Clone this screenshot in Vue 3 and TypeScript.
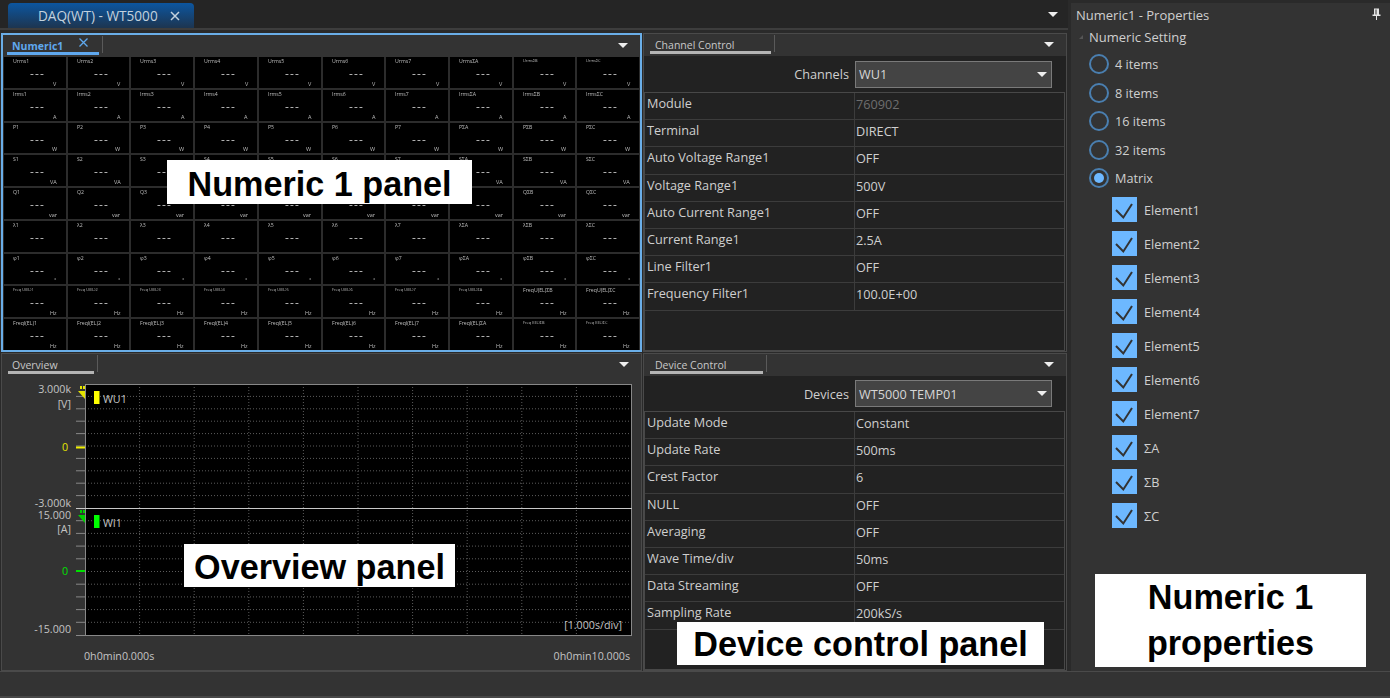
<script setup lang="ts">
const sigma = ['1', '2', '3', '4', '5', '6', '7', 'ΣA', 'ΣB', 'ΣC']

const rows = [
  { name: 'Urms', unit: 'V' },
  { name: 'Irms', unit: 'A' },
  { name: 'P', unit: 'W' },
  { name: 'S', unit: 'VA' },
  { name: 'Q', unit: 'var' },
  { name: 'λ', unit: '' },
  { name: 'φ', unit: '°' },
  { name: 'Freq U(EL)', unit: 'Hz' },
  { name: 'FreqI(EL)', unit: 'Hz' }
]

// a few labels are squeezed to a smaller size in the real app
function isSmall(name: string, i: number) {
  if (name === 'Urms') return i > 7
  if (name === 'Freq U(EL)') return i < 8
  if (name === 'FreqI(EL)') return i > 7
  return false
}

const cells = rows.flatMap((r) =>
  sigma.map((s, i) => ({
    id: r.name + s,
    label: (r.name === 'Freq U(EL)' && i > 7 ? 'FreqU(EL)' : r.name === 'FreqI(EL)' && i > 7 ? 'Freq I(EL)' : r.name) + s,
    unit: r.unit,
    small: isSmall(r.name, i)
  }))
)

const channelRows = [
  ['Module', '760902'],
  ['Terminal', 'DIRECT'],
  ['Auto Voltage Range1', 'OFF'],
  ['Voltage Range1', '500V'],
  ['Auto Current Range1', 'OFF'],
  ['Current Range1', '2.5A'],
  ['Line Filter1', 'OFF'],
  ['Frequency Filter1', '100.0E+00']
]

const deviceRows = [
  ['Update Mode', 'Constant'],
  ['Update Rate', '500ms'],
  ['Crest Factor', '6'],
  ['NULL', 'OFF'],
  ['Averaging', 'OFF'],
  ['Wave Time/div', '50ms'],
  ['Data Streaming', 'OFF'],
  ['Sampling Rate', '200kS/s']
]

const radios = ['4 items', '8 items', '16 items', '32 items', 'Matrix']
const checks = ['Element1', 'Element2', 'Element3', 'Element4', 'Element5', 'Element6', 'Element7', 'ΣA', 'ΣB', 'ΣC']

const vLines = Array.from({ length: 9 }, (_, i) => 85 + 54.6 * (i + 1))
const topLines = Array.from({ length: 9 }, (_, i) => 384 + 12.4 * (i + 1))
const bottomLines = Array.from({ length: 9 }, (_, i) => 508 + 12.7 * (i + 1))
</script>

<template>
  <div class="app">
    <div class="main">
      <div class="left">
        <div class="doc-strip">
          <div class="doc-tab">
            <span>DAQ(WT) - WT5000</span>
            <svg width="10" height="10" viewBox="0 0 10 10">
              <path d="M1 1l8 8M9 1l-8 8" stroke="#c4d2de" stroke-width="1.500" />
            </svg>
          </div>
          <i class="arrow doc-arrow"></i>
        </div>

        <div class="workspace">
          <section class="panel numeric">
            <header class="panel-head">
              <div class="tab active">
                Numeric1
                <svg class="tab-x" width="9" height="9" viewBox="0 0 9 9">
                  <path d="M0.500 0.500l8 8M8.500 0.500l-8 8" stroke="#5fa8ee" stroke-width="1.300" />
                </svg>
              </div>
              <i class="arrow"></i>
            </header>
            <div class="matrix">
              <div v-for="c in cells" :key="c.id" class="cell">
                <span class="cell-label" :class="{ small: c.small }">{{ c.label }}</span>
                <span class="cell-value">---</span>
                <span class="cell-unit">{{ c.unit }}</span>
              </div>
            </div>
            <div class="callout callout-numeric">Numeric 1 panel</div>
          </section>

          <section class="panel">
            <header class="panel-head">
              <div class="tab tab-channel">Channel Control</div>
              <i class="arrow"></i>
            </header>
            <div class="control-body">
              <div class="picker picker-channel">
                <label>Channels</label>
                <div class="select">WU1<i class="arrow"></i></div>
              </div>
              <div class="table">
                <div v-for="r in channelRows" :key="r[0]" class="row">
                  <div class="key">{{ r[0] }}</div>
                  <div class="val" :class="{ muted: r[0] === 'Module' }">{{ r[1] }}</div>
                </div>
              </div>
            </div>
          </section>

          <section class="panel overview">
            <header class="panel-head">
              <div class="tab tab-overview">Overview</div>
              <i class="arrow"></i>
            </header>
            <svg class="chart" viewBox="0 376 640 294" width="640" height="294">
              <rect x="85" y="384" width="546" height="251" fill="#000" />
              <g stroke="#5c5c5c" stroke-dasharray="1 2">
                <line v-for="x in vLines" :key="x" :x1="x" y1="384" :x2="x" y2="635" />
                <line v-for="y in topLines" :key="y" x1="85" :y1="y" x2="631" :y2="y" />
                <line v-for="y in bottomLines" :key="y" x1="85" :y1="y" x2="631" :y2="y" />
              </g>
              <g stroke="#888">
                <line x1="85.500" y1="384" x2="85.500" y2="635" />
                <line x1="631.500" y1="384" x2="631.500" y2="635" />
                <line x1="85" y1="384.500" x2="632" y2="384.500" />
                <line x1="76" y1="635.500" x2="632" y2="635.500" />
                <line v-for="y in topLines" :key="'t' + y" x1="76" :y1="y" x2="85" :y2="y" />
                <line v-for="y in bottomLines" :key="'b' + y" x1="76" :y1="y" x2="85" :y2="y" />
              </g>
              <line x1="76" y1="508.500" x2="632" y2="508.500" stroke="#c8c8c8" />
              <line x1="76" y1="447.500" x2="85" y2="447.500" stroke="#f0f000" stroke-width="2" />
              <line x1="76" y1="571" x2="85" y2="571" stroke="#00e000" stroke-width="2" />

              <path d="M78 391h7v8z M80 386h2v3h-2z M83 386h2v3h-2z" fill="#e6e600" />
              <path d="M78 515h7v8z M80 510h2v3h-2z M83 510h2v3h-2z" fill="#00d000" />
              <rect x="94" y="391" width="5.500" height="13" fill="#ffff00" />
              <rect x="94" y="515" width="5.500" height="13" fill="#00ff00" />

              <g class="chart-text">
                <text x="71" y="393" text-anchor="end">3.000k</text>
                <text x="71" y="408" text-anchor="end">[V]</text>
                <text class="yellow" x="68" y="451" text-anchor="end">0</text>
                <text x="71" y="507" text-anchor="end">-3.000k</text>
                <text x="71" y="519" text-anchor="end">15.000</text>
                <text x="71" y="533" text-anchor="end">[A]</text>
                <text class="green" x="68" y="575" text-anchor="end">0</text>
                <text x="71" y="633" text-anchor="end">-15.000</text>
                <text x="103" y="403">WU1</text>
                <text x="103" y="527">WI1</text>
                <text x="622" y="629" text-anchor="end">[1.000s/div]</text>
                <text x="84" y="660">0h0min0.000s</text>
                <text x="630" y="660" text-anchor="end">0h0min10.000s</text>
              </g>
            </svg>
            <div class="callout callout-overview">Overview panel</div>
          </section>

          <section class="panel">
            <header class="panel-head">
              <div class="tab tab-device">Device Control</div>
              <i class="arrow"></i>
            </header>
            <div class="control-body">
              <div class="picker picker-device">
                <label>Devices</label>
                <div class="select">WT5000 TEMP01<i class="arrow"></i></div>
              </div>
              <div class="table">
                <div v-for="r in deviceRows" :key="r[0]" class="row">
                  <div class="key">{{ r[0] }}</div>
                  <div class="val">{{ r[1] }}</div>
                </div>
              </div>
            </div>
            <div class="callout callout-device">Device control panel</div>
          </section>
        </div>
      </div>

      <aside class="props">
        <div class="props-title">
          <span>Numeric1 - Properties</span>
          <svg class="pin" width="9" height="12" viewBox="0 0 9 12">
            <path d="M2 0.500h5v6h1.500v1.500h-8v-1.500h1.500z M3.500 1.500v5h1v-5z M4 8h1v4h-1z" fill="#e4e4e4" fill-rule="evenodd" />
          </svg>
        </div>
        <div class="props-group"><i class="twisty"></i>Numeric Setting</div>
        <div class="radios">
          <div v-for="r in radios" :key="r" class="radio-row">
            <span class="radio" :class="{ on: r === 'Matrix' }"></span>{{ r }}
          </div>
        </div>
        <div class="checks">
          <div v-for="c in checks" :key="c" class="check-row">
            <span class="check">
              <svg width="25" height="25" viewBox="0 0 25 25">
                <path d="M4 13l7.300 7.500 8.700-13.500" fill="none" stroke="#333" stroke-width="2" />
              </svg>
            </span>{{ c }}
          </div>
        </div>
        <div class="callout callout-props">Numeric 1<br />properties</div>
      </aside>
    </div>
    <footer class="status"></footer>
  </div>
</template>

<style>
html,
body {
  margin: 0;
  background: #2a2a2a;
}
</style>

<style scoped>
.app {
  width: 1390px;
  height: 698px;
  overflow: hidden;
  display: flex;
  flex-direction: column;
  font-family: "Open Sans", "Noto Sans", sans-serif;
  font-size: 12.7px;
  color: #cfcfcf;
  background: #2a2a2a;
}

.main {
  flex: 1;
  min-height: 0;
  display: flex;
}

.left {
  width: 1068px;
  display: flex;
  flex-direction: column;
}

.doc-strip {
  height: 25px;
  padding: 3px 0 0 8px;
  display: flex;
  justify-content: space-between;
  align-items: flex-start;
  background: #252525;
  border-bottom: 2px solid #3d3d3d;
}

.doc-tab {
  width: 186px;
  height: 25px;
  box-sizing: border-box;
  padding-left: 30px;
  display: flex;
  align-items: center;
  gap: 12px;
  border-radius: 4px 4px 0 0;
  background: linear-gradient(#0c56a0, #1d3550);
  color: #c4d2de;
  font-size: 13.600px;
}

.doc-arrow {
  margin: 9px 10px 0 0;
}

.arrow {
  display: block;
  width: 0;
  height: 0;
  border-left: 5px solid transparent;
  border-right: 5px solid transparent;
  border-top: 5px solid #eee;
}

.workspace {
  flex: 1;
  min-height: 0;
  display: grid;
  grid-template-columns: 641px 424px;
  grid-template-rows: 319px 318px;
  gap: 1px 1px;
  padding: 3px 0 0 1px;
}

.panel {
  position: relative;
  display: flex;
  flex-direction: column;
  min-height: 0;
  background: #333;
  border: 1px solid #4a4a4a;
}

.panel.numeric {
  border: 2px solid #6aaee8;
}

.panel-head {
  height: 22px;
  flex: none;
  display: flex;
  align-items: flex-start;
  justify-content: space-between;
  padding-right: 12px;
  background: #333;
}

.panel-head .arrow {
  margin-top: 8px;
}

.tab {
  position: relative;
  height: 20px;
  box-sizing: border-box;
  padding: 4px 0 0 6px;
  margin-left: 6px;
  font-size: 10.500px;
  border-bottom: 3px solid #b4b4b4;
  color: #c8c8c8;
  white-space: nowrap;
}

.tab::after {
  content: "";
  position: absolute;
  right: -4px;
  top: 1px;
  height: 17px;
  border-right: 1px solid #5a5a5a;
}

.tab.active {
  width: 92px;
  color: #5fa8ee;
  font-weight: 700;
  border-color: #5fa8ee;
  margin-left: 4px;
  padding-left: 5px;
}

.tab-x {
  position: absolute;
  left: 72px;
  top: 3px;
}

.tab-channel {
  width: 121px;
  padding-left: 5px;
}

.tab-overview {
  width: 86px;
  padding-left: 4px;
}

.tab-device {
  width: 113px;
  padding-left: 5px;
}

.matrix {
  flex: 1;
  min-height: 0;
  display: grid;
  grid-template-columns: repeat(10, 1fr);
  grid-template-rows: repeat(9, 1fr);
  gap: 2px;
  padding: 0 1px 0 1px;
  background: #2c2c2c;
}

.cell {
  position: relative;
  background: #000;
  min-width: 0;
  overflow: hidden;
  color: #bdbdbd;
}

/* own layer keeps the tiny text grey instead of colour-fringed */
.cell-label {
  position: absolute;
  left: 9px;
  top: 0;
  font-size: 5.200px;
  white-space: nowrap;
  will-change: transform;
}

.cell-label.small {
  font-size: 3.900px;
  top: 1px;
}

.cell-value {
  position: absolute;
  left: 26px;
  top: 9px;
  font-size: 12px;
  letter-spacing: 1.200px;
  line-height: 16px;
  will-change: transform;
}

.cell-unit {
  position: absolute;
  right: 9px;
  bottom: 0;
  font-size: 5.500px;
  will-change: transform;
}

.control-body {
  flex: 1;
  min-height: 0;
  display: flex;
  flex-direction: column;
  background: #222;
}

.picker {
  flex: none;
  display: flex;
  align-items: center;
  justify-content: flex-end;
  gap: 6px;
  padding: 0 14px 0 0;
  box-sizing: border-box;
}

.picker-channel {
  height: 36px;
}

.picker-device {
  height: 35px;
}

.select {
  width: 197px;
  height: 27px;
  box-sizing: border-box;
  display: flex;
  align-items: center;
  justify-content: space-between;
  padding: 0 4px 0 3px;
  background: #444;
  border: 1px solid #7a7a7a;
  color: #d6d6d6;
}

.table {
  flex: 1;
  min-height: 0;
  margin: 0 1px 0 0;
  border: 1px solid #484848;
  overflow: hidden;
}

.row {
  display: flex;
  height: 27.200px;
  box-sizing: border-box;
  border-bottom: 1px solid #3c3c3c;
}

.key {
  width: 210px;
  box-sizing: border-box;
  padding: 1px 0 0 2px;
  border-right: 1px solid #3c3c3c;
}

.val {
  flex: 1;
  padding: 2px 0 0 1px;
}

.muted {
  color: #6e6e6e;
}

.chart {
  display: block;
  margin-left: -2px;
}

.chart-text text {
  font-family: "Open Sans", sans-serif;
  font-size: 10.700px;
  fill: #c4c4c4;
}

.chart-text .yellow {
  fill: #e6e600;
}

.chart-text .green {
  fill: #00e000;
}

.props {
  position: relative;
  margin: 3px 0 0 3px;
  flex: 1;
  background: #333;
  padding: 0 0 0 5px;
  box-sizing: border-box;
}

.props-title {
  height: 24px;
  display: flex;
  justify-content: space-between;
  padding: 3px 9px 0 0;
  box-sizing: border-box;
  font-size: 13px;
}

.pin {
  margin-top: 2px;
}

.props-group {
  position: relative;
  height: 20px;
  padding-left: 13px;
  line-height: 20px;
  font-size: 13px;
}

.twisty {
  position: absolute;
  left: 3px;
  top: 8px;
  border-left: 4px solid transparent;
  border-bottom: 4px solid #555;
}

.radios {
  padding: 3px 0 0 13px;
}

.radio-row {
  height: 28.500px;
  display: flex;
  align-items: center;
  gap: 6px;
}

.radio {
  position: relative;
  width: 20px;
  height: 20px;
  box-sizing: border-box;
  border: 2px solid #4a7fb0;
  border-radius: 50%;
}

.radio.on::after {
  content: "";
  position: absolute;
  left: 3px;
  top: 3px;
  width: 10px;
  height: 10px;
  border-radius: 50%;
  background: #6db8ff;
}

.checks {
  padding: 0 0 0 36px;
}

.check-row {
  height: 34px;
  display: flex;
  align-items: center;
  gap: 7px;
}

.check {
  width: 25px;
  height: 25px;
  background: #6db8ff;
}

.check svg {
  display: block;
}

.status {
  height: 27px;
  flex: none;
  background: #333;
  border-top: 1px solid #4a4a4a;
  border-bottom: 2px solid #474747;
  box-sizing: border-box;
}

.callout {
  position: absolute;
  z-index: 2;
  background: #fff;
  color: #000;
  font-family: "Liberation Sans", Arial, sans-serif;
  font-size: 34.200px;
  font-weight: 700;
  text-align: center;
  white-space: nowrap;
  line-height: 44px;
}

.callout-numeric {
  left: 164px;
  top: 125px;
  width: 305px;
  height: 44px;
  line-height: 48px;
}

.callout-overview {
  left: 182px;
  top: 190px;
  width: 271px;
  height: 43px;
  line-height: 46px;
}

.callout-device {
  left: 33px;
  top: 268px;
  width: 367px;
  height: 43px;
}

.callout-props {
  left: 24px;
  top: 571px;
  width: 271px;
  height: 93px;
  line-height: 46px;
}
</style>
